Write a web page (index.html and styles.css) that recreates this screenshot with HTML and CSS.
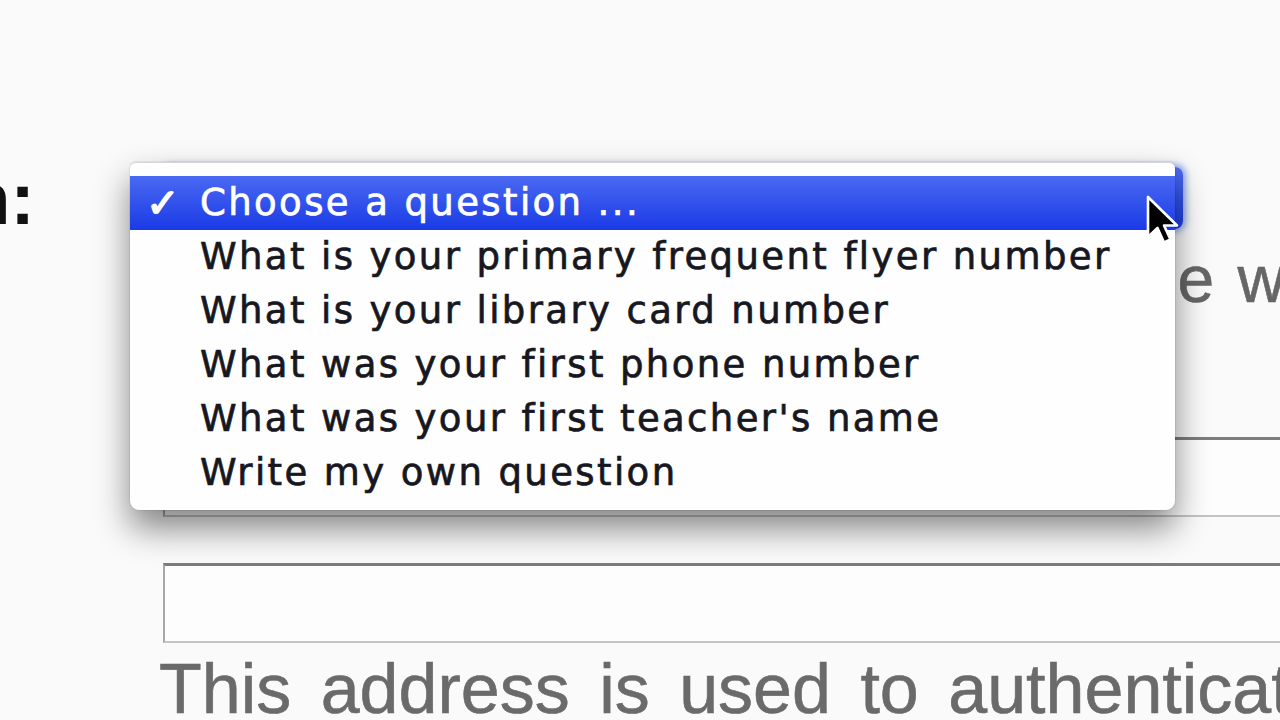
FILE: index.html
```html
<!DOCTYPE html>
<html>
<head>
<meta charset="utf-8">
<title>Security question</title>
<link rel="stylesheet" href="styles.css">
</head>
<body>
<div class="page">
  <div class="q-row">
    <div class="label"><span>Question:</span></div>
    <div class="field">
      <div class="select"></div>
      <ul class="menu">
        <li class="item selected"><span class="check">✓</span><span class="txt">Choose a question ...</span></li>
        <li class="item"><span class="check"></span><span class="txt">What is your primary frequent flyer number</span></li>
        <li class="item"><span class="check"></span><span class="txt">What is your library card number</span></li>
        <li class="item"><span class="check"></span><span class="txt">What was your first phone number</span></li>
        <li class="item"><span class="check"></span><span class="txt">What was your first teacher's name</span></li>
        <li class="item"><span class="check"></span><span class="txt">Write my own question</span></li>
      </ul>
    </div>
  </div>
  <div class="field-col">
    <p class="desc"><span class="line">It helps us know it's you every time we want to reach you.</span><span class="line">Keep the answer. <a class="link">Learn More</a></span></p>
    <div class="input"></div>
    <div class="input"></div>
    <p class="help">This address is used to authenticate your account.</p>
  </div>
  <svg class="cursor" width="34" height="52" viewBox="0 0 34 52">
    <path d="M2 2 L2 42 L11.5 33 L18 47.5 L24.5 44.5 L18 30.5 L31 30.5 Z" fill="#000" stroke="#fff" stroke-width="2.6" stroke-linejoin="round"/>
  </svg>
</div>
</body>
</html>
```
FILE: styles.css
```css
html, body {
  margin: 0;
  padding: 0;
  background: #fafafa;
  overflow: hidden;
}

.page {
  position: relative;
  width: 1280px;
  height: 720px;
  overflow: hidden;
  box-sizing: border-box;
  padding-top: 162px;
  font-family: "Liberation Sans", Arial, sans-serif;
}

.q-row {
  display: flex;
  height: 74px;
}

.label {
  width: 35px;
  flex-shrink: 0;
  display: flex;
  justify-content: flex-end;
  font-weight: bold;
  font-size: 74px;
  line-height: 74px;
  color: #111;
  white-space: nowrap;
}

.field {
  position: relative;
  margin-left: 128px;
  width: 1020px;
}

.select {
  margin-top: 5px;
  height: 62px;
  border-radius: 8px;
  background: linear-gradient(#4e6cf2, #1c3de6);
  box-shadow: 0 0 6px 3px rgba(80, 125, 230, 0.6);
}

.menu {
  position: absolute;
  top: 0;
  left: -33px;
  width: 1045px;
  margin: 0;
  padding: 13px 0 10px;
  list-style: none;
  background: #fefefe;
  border-top: 1px solid #d6d6d6;
  border-radius: 6px 6px 9px 9px;
  box-shadow: 0 18px 34px rgba(0, 0, 0, 0.48), 0 0 0 1px rgba(0, 0, 0, 0.06);
  font-family: "DejaVu Sans", Verdana, sans-serif;
  font-size: 37px;
  line-height: 54px;
  letter-spacing: 2.4px;
  color: #17171f;
  -webkit-text-stroke: 0.7px currentColor;
}

.item {
  display: flex;
  height: 54px;
  white-space: nowrap;
}

.item.selected {
  background: linear-gradient(#4a69f2, #1a3ae6);
  color: #fff;
}

.check {
  width: 70px;
  flex-shrink: 0;
  box-sizing: border-box;
  padding-left: 16px;
  font-size: 40px;
  -webkit-text-stroke: 1.6px currentColor;
}

.field-col {
  margin-left: 163px;
  width: 1200px;
}

.desc {
  margin: 3px 0 0;
  font-size: 66px;
  line-height: 80px;
  color: #666;
  white-space: nowrap;
  word-spacing: 4.8px;
  -webkit-text-stroke: 0.6px currentColor;
}

.line {
  display: block;
}

.link {
  color: #0a6fd0;
}

.input {
  height: 80px;
  box-sizing: border-box;
  margin-top: 38px;
  background: #fdfdfd;
  border: 2px solid #a8a8a8;
  border-top: 3px solid #7c7c7c;
  border-bottom-color: #c4c4c4;
}

.input + .input {
  margin-top: 46px;
}

.help {
  margin: 11px 0 0 -4px;
  font-size: 70px;
  line-height: 70px;
  color: #6a6a6a;
  white-space: nowrap;
  word-spacing: 10px;
  -webkit-text-stroke: 0.6px currentColor;
}

.cursor {
  position: absolute;
  left: 1146px;
  top: 195px;
}
```
